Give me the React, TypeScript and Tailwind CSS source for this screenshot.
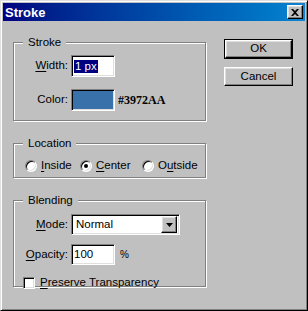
import type { ReactNode } from "react";

// Win98-style "Stroke" dialog (Photoshop layer effect)

const raised =
  "border border-t-white border-l-white border-r-black border-b-black shadow-[inset_-1px_-1px_0_#808080,inset_1px_1px_0_#dfdfdf]";
const sunken =
  "border border-t-[#808080] border-l-[#808080] border-r-white border-b-white shadow-[inset_1px_1px_0_#000,inset_-1px_-1px_0_#dfdfdf]";

function Group({ label, className, children }: { label: string; className?: string; children: ReactNode }) {
  return (
    <fieldset
      className={
        "w-[193px] border border-[#808080] shadow-[inset_1px_1px_0_#fff,1px_1px_0_#fff] " + (className ?? "")
      }
    >
      <legend className="ml-[9px] bg-[#c0c0c0] px-[5px] leading-[14px]">{label}</legend>
      {children}
    </fieldset>
  );
}

function Radio({ checked, children }: { checked?: boolean; children: ReactNode }) {
  return (
    <div className="flex items-center">
      <span className="flex h-[12px] w-[12px] items-center justify-center rounded-full border border-t-[#808080] border-l-[#808080] border-r-white border-b-white bg-white shadow-[inset_1px_1px_0_#000,inset_-1px_-1px_0_#dfdfdf]">
        {checked && <span className="h-[4px] w-[4px] rounded-full bg-black" />}
      </span>
      <span className="ml-[4px]">{children}</span>
    </div>
  );
}

function U({ children }: { children: ReactNode }) {
  return <span className="underline underline-offset-[2px]">{children}</span>;
}

function Row({ label, className, children }: { label: ReactNode; className?: string; children: ReactNode }) {
  return (
    <div className={"flex items-center " + (className ?? "")}>
      <span className="w-[54px] text-right">{label}</span>
      <div className="ml-[3px] flex items-center">{children}</div>
    </div>
  );
}

export default function App() {
  return (
    <div className="flex h-[311px] w-[308px] flex-col border border-t-[#dfdfdf] border-l-[#dfdfdf] border-r-black border-b-black bg-[#c0c0c0] p-[1px] font-['Liberation_Sans',Arial,sans-serif] text-[11.5px] text-black shadow-[inset_1px_1px_0_#fff,inset_-1px_-1px_0_#808080]">
      <div className="m-[1px] flex h-[18px] items-center justify-between bg-gradient-to-r from-[#000080] to-[#1084d0] pl-[2px] pr-[2px]">
        <span className="text-[13px] font-bold leading-none text-white">Stroke</span>
        <button className={"flex h-[14px] w-[16px] items-center justify-center bg-[#c0c0c0] " + raised}>
          <svg width="8" height="7" viewBox="0 0 8 7">
            <path d="M0 0h2l2 2 2-2h2L5 3.5 8 7H6L4 5 2 7H0l3-3.5z" fill="#000" />
          </svg>
        </button>
      </div>

      <div className="flex flex-1 items-start pl-[11px] pt-[13px]">
        <div className="flex flex-col">
          <Group label="Stroke" className="h-[86px]">
            <Row
              className="mt-[6px]"
              label={
                <>
                  <U>W</U>idth:
                </>
              }
            >
              <div className={"flex h-[22px] w-[44px] items-center bg-white px-[2px] " + sunken}>
                <span className="bg-[#000080] px-[1px] leading-[13px] text-white">1 px</span>
              </div>
            </Row>
            <Row className="mt-[12px]" label="Color:">
              <div className={"h-[22px] w-[44px] bg-[#3972aa] " + sunken} />
              <span className="ml-[3px] font-['Liberation_Serif',serif] text-[12px] font-bold">#3972AA</span>
            </Row>
          </Group>

          <Group label="Location" className="mt-[15px] h-[42px]">
            <div className="flex items-center pl-[11px] pt-[7px]">
              <div className="w-[55px]">
                <Radio>
                  <U>I</U>nside
                </Radio>
              </div>
              <div className="w-[62px]">
                <Radio checked>
                  <U>C</U>enter
                </Radio>
              </div>
              <Radio>
                O<U>u</U>tside
              </Radio>
            </div>
          </Group>

          <Group label="Blending" className="mt-[15px] h-[94px]">
            <Row
              className="mt-[7px]"
              label={
                <>
                  <U>M</U>ode:
                </>
              }
            >
              <div className={"flex h-[21px] w-[109px] items-center bg-white pl-[4px] pr-[2px] " + sunken}>
                <span className="flex-1">Normal</span>
                <span className={"flex h-[17px] w-[16px] items-center justify-center bg-[#c0c0c0] " + raised}>
                  <svg width="7" height="4" viewBox="0 0 7 4">
                    <path d="M0 0h7L3.5 4z" fill="#000" />
                  </svg>
                </span>
              </div>
            </Row>
            <Row
              className="mt-[9px]"
              label={
                <>
                  <U>O</U>pacity:
                </>
              }
            >
              <div className={"flex h-[21px] w-[44px] items-center bg-white px-[2px] " + sunken}>100</div>
              <span className="ml-[5px] text-[10px]">%</span>
            </Row>
            <div className="mt-[9px] flex items-center pl-[9px]">
              <span className={"h-[12px] w-[12px] bg-white " + sunken} />
              <span className="ml-[5px]">
                <U>P</U>reserve Transparency
              </span>
            </div>
          </Group>
        </div>

        <div className="ml-[18px] mt-[4px] flex flex-col gap-[8px]">
          <button className="h-[20px] w-[69px] border border-black">
            <span className={"flex h-full w-full items-center justify-center " + raised}>OK</span>
          </button>
          <button className={"flex h-[19px] w-[69px] items-center justify-center " + raised}>Cancel</button>
        </div>
      </div>
    </div>
  );
}
